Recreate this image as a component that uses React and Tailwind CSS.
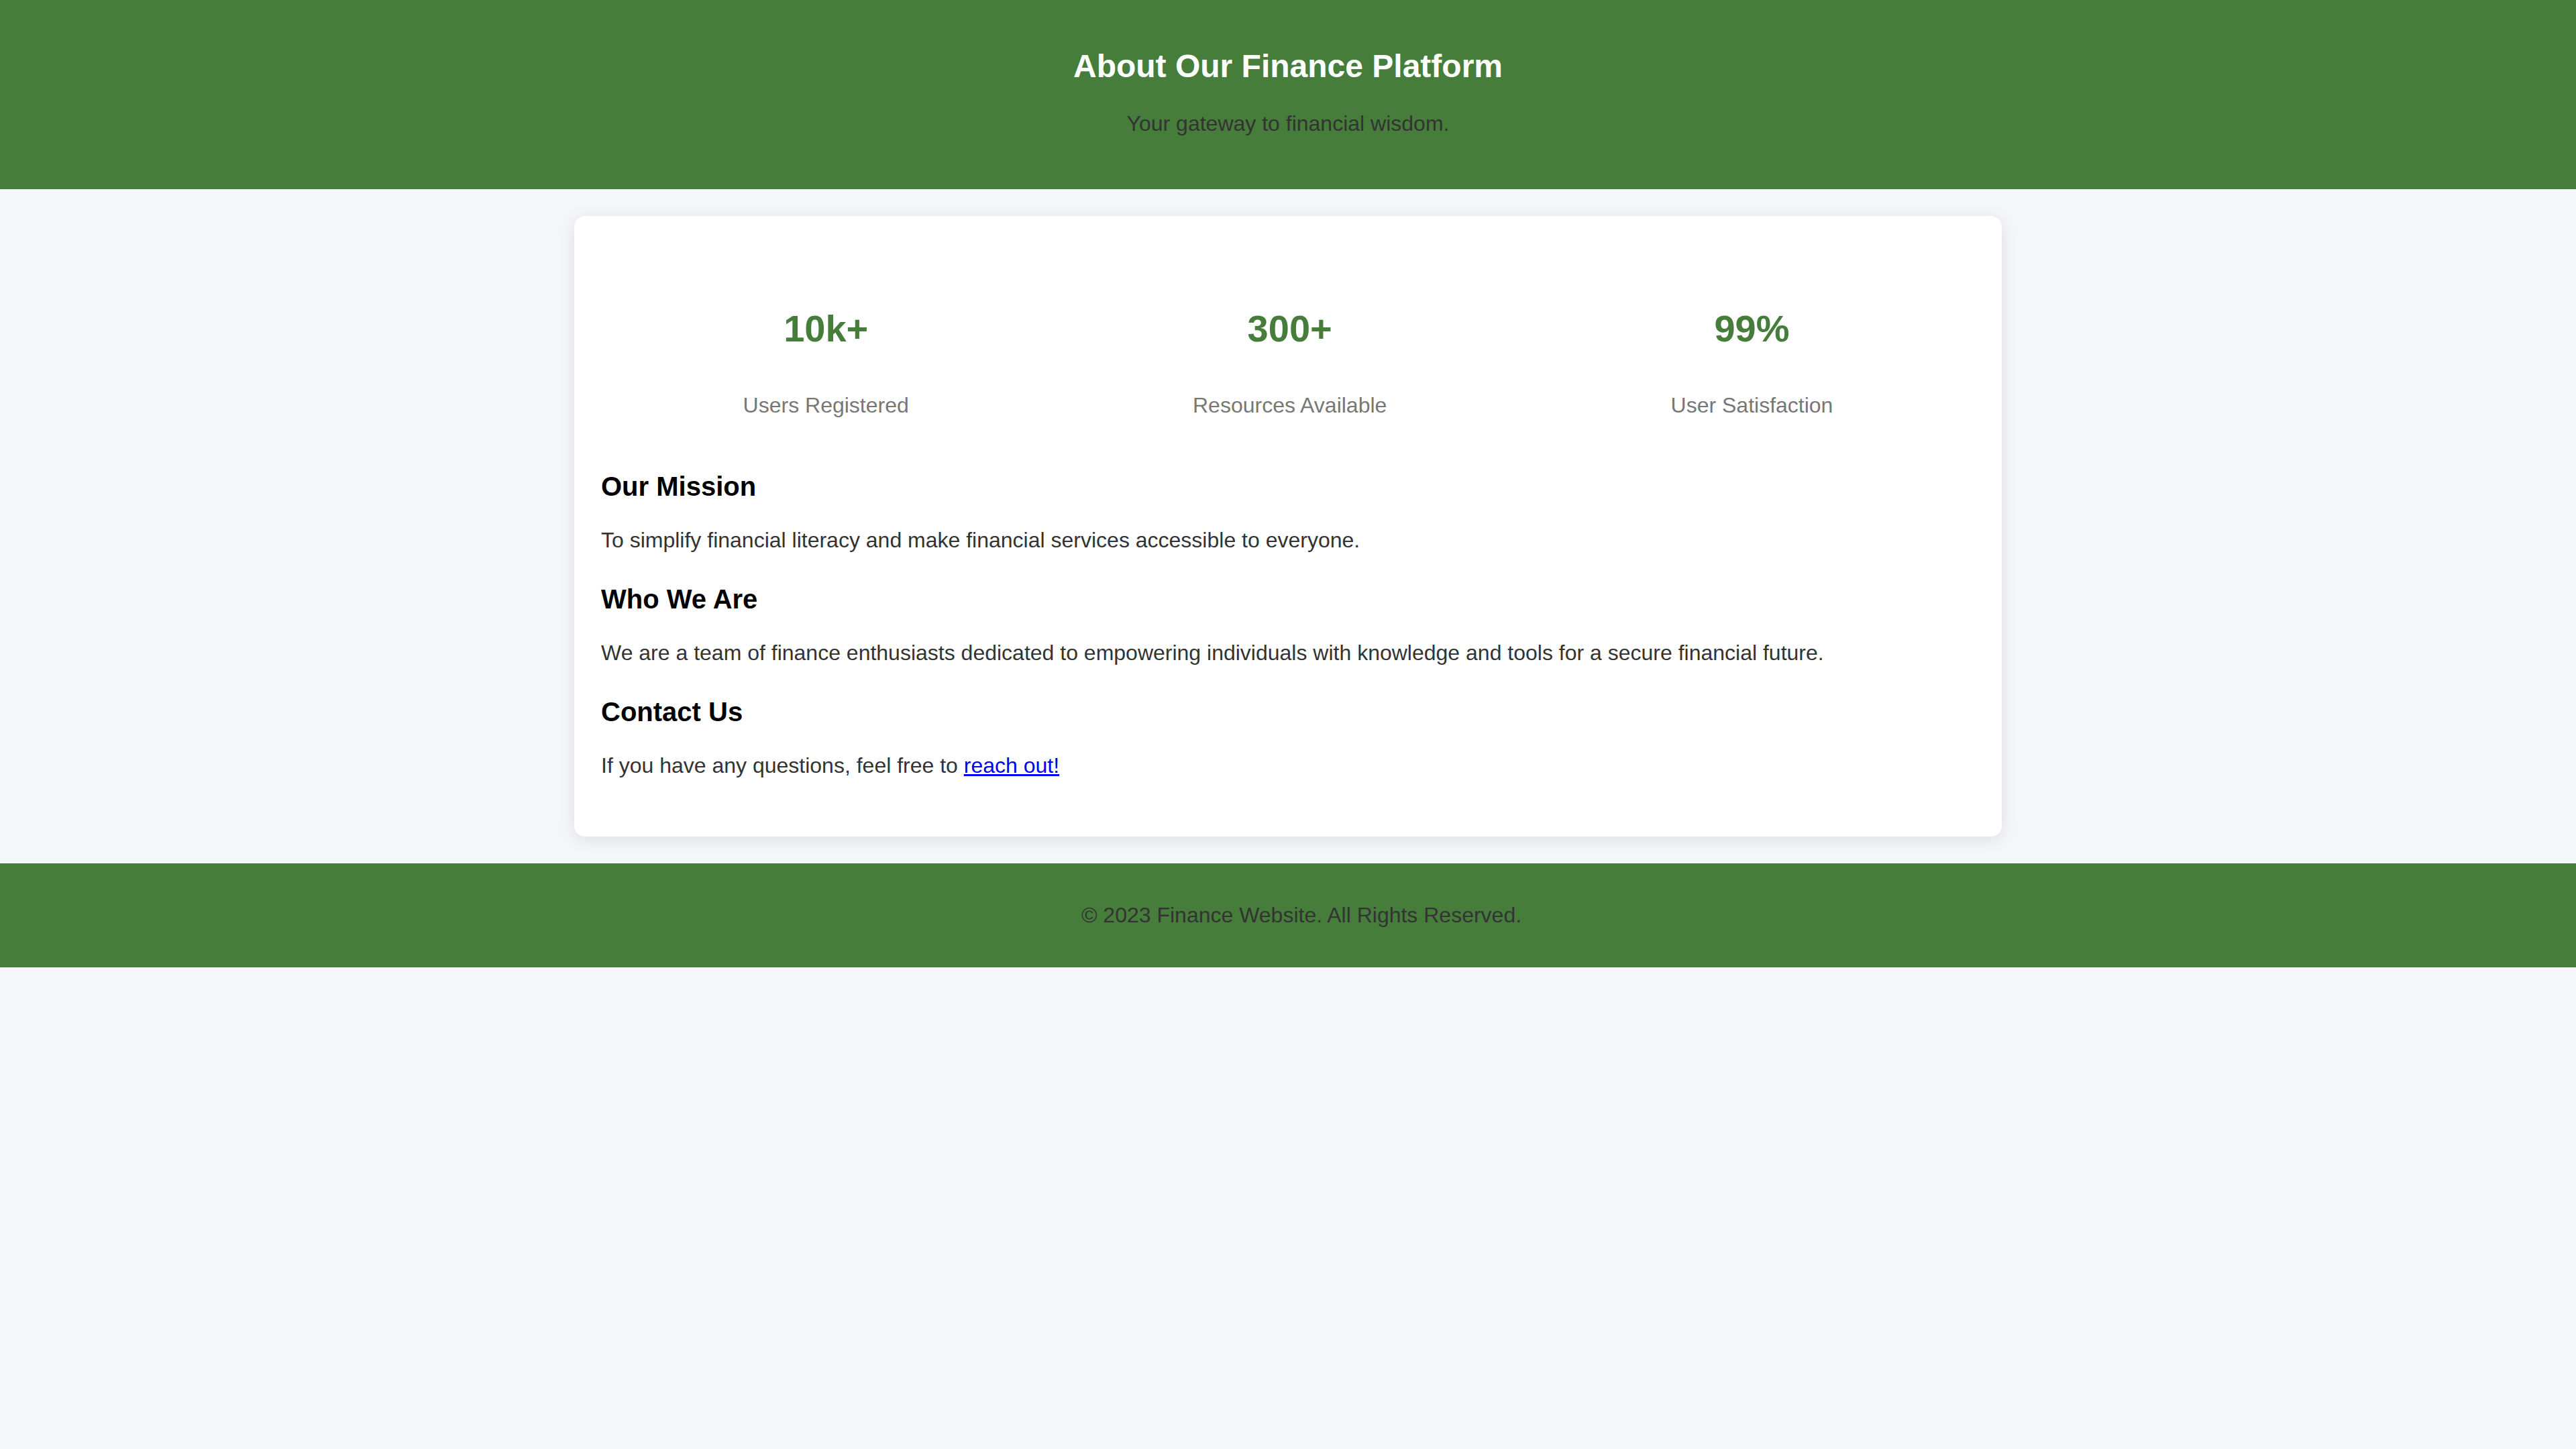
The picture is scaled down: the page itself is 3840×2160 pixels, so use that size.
const stats = [
  { value: "10k+", label: "Users Registered" },
  { value: "300+", label: "Resources Available" },
  { value: "99%", label: "User Satisfaction" },
];

const sections = [
  {
    title: "Our Mission",
    body: "To simplify financial literacy and make financial services accessible to everyone.",
  },
  {
    title: "Who We Are",
    body: "We are a team of finance enthusiasts dedicated to empowering individuals with knowledge and tools for a secure financial future.",
  },
];

function App() {
  return (
    <div className="min-h-screen bg-[#f4f6f9] font-['Liberation_Sans',Arial,sans-serif] text-[#333]">
      <header className="bg-[#467d3a] pt-[71px] pb-[78px] text-center">
        <h1 className="text-[48px] leading-[56px] font-bold text-white">
          About Our Finance Platform
        </h1>
        <p className="mt-[37px] text-[32px] leading-[40px] text-[#333]">
          Your gateway to financial wisdom.
        </p>
      </header>

      <main className="py-[40px]">
        <div className="w-[2128px] mx-auto bg-white rounded-[16px] shadow-[0_4px_24px_rgba(0,0,0,0.1)] p-[40px]">
          <div className="flex justify-around pt-[95px] pb-[77px] text-center">
            {stats.map((s) => (
              <div key={s.label}>
                <div className="text-[56px] leading-[66px] font-bold text-[#467d3a]">
                  {s.value}
                </div>
                <div className="mt-[61px] text-[32px] leading-[40px] text-[#777]">
                  {s.label}
                </div>
              </div>
            ))}
          </div>

          {sections.map((sec) => (
            <section key={sec.title} className="mb-[44px]">
              <h3 className="text-[40px] leading-[48px] font-bold text-black">
                {sec.title}
              </h3>
              <p className="mt-[36px] text-[32px] leading-[40px]">{sec.body}</p>
            </section>
          ))}

          <section className="mb-[46px]">
            <h3 className="text-[40px] leading-[48px] font-bold text-black">Contact Us</h3>
            <p className="mt-[36px] text-[32px] leading-[40px]">
              If you have any questions, feel free to{" "}
              <a href="#" className="text-[#0000ee] underline">
                reach out!
              </a>
            </p>
          </section>
        </div>
      </main>

      <footer className="bg-[#467d3a] pt-[57px] pb-[58px] pl-[40px] text-center">
        <p className="text-[32px] leading-[40px] text-[#333]">
          © 2023 Finance Website. All Rights Reserved.
        </p>
      </footer>
    </div>
  );
}

export default App;
